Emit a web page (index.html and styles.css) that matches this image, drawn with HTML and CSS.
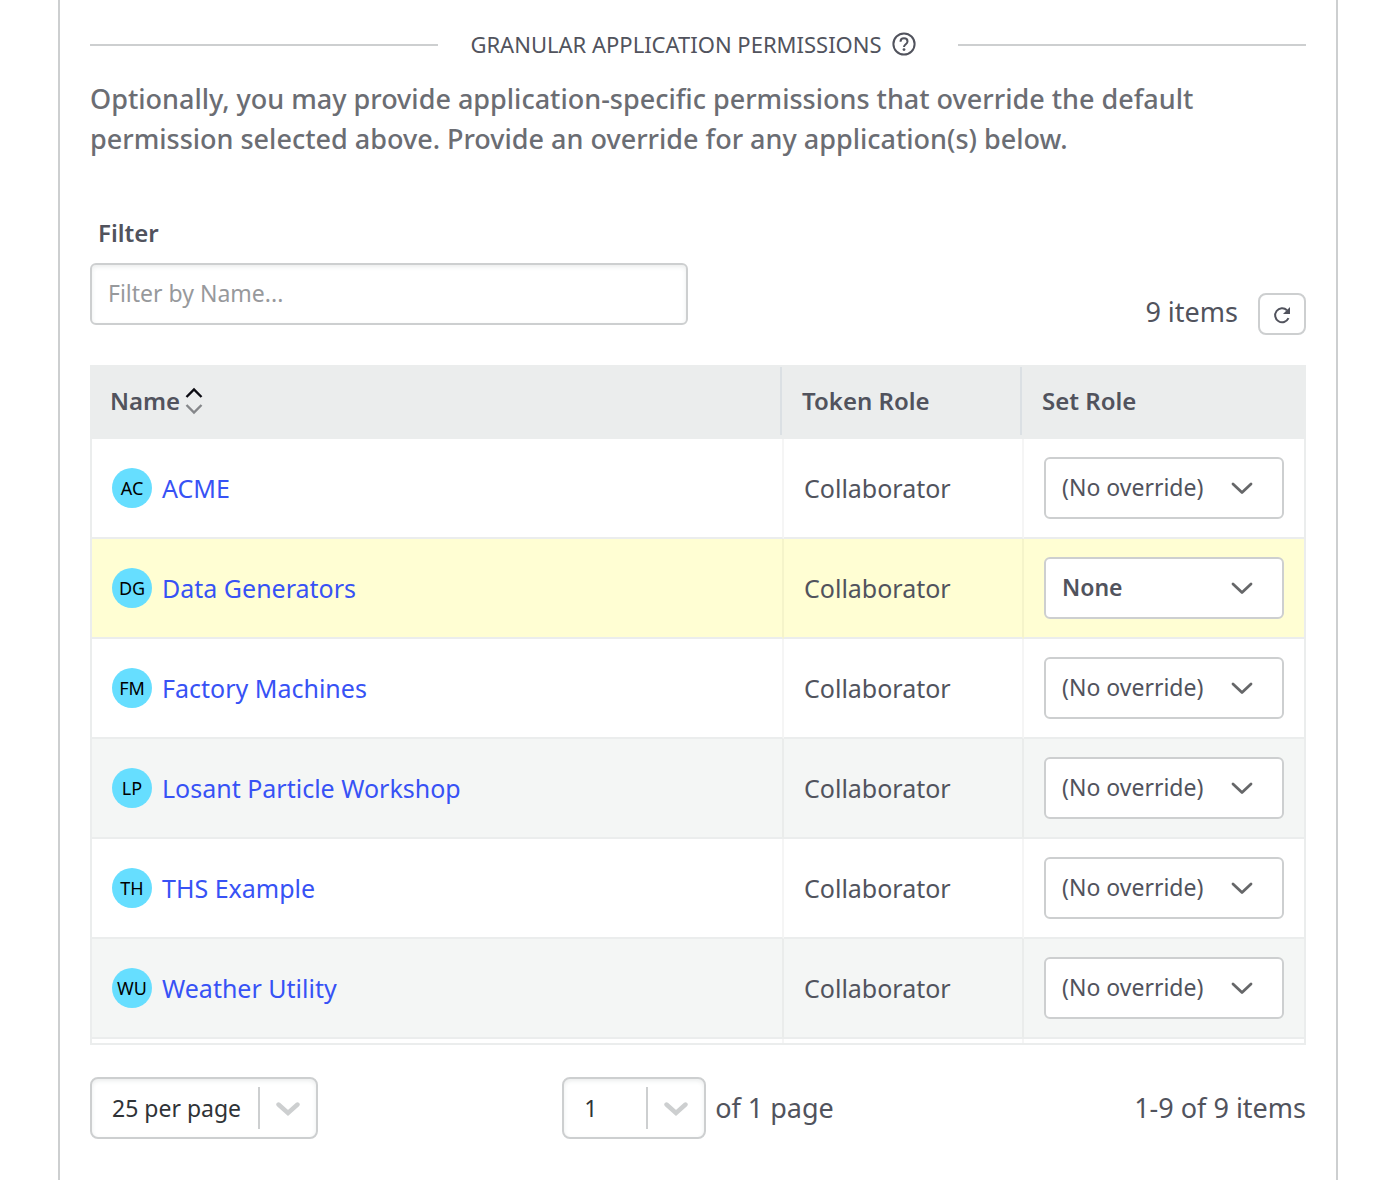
FILE: index.html
```html
<!DOCTYPE html>
<html lang="en">
<head>
<meta charset="utf-8">
<meta name="viewport" content="width=device-width, initial-scale=1">
<title>Granular Application Permissions</title>
<link rel="stylesheet" href="styles.css">
</head>
<body>
<svg width="0" height="0" class="sprite" aria-hidden="true">
  <symbol id="chevron" viewBox="0 0 24 16"><path d="M3 4 12 12.500 21 4" fill="none" stroke="currentColor" stroke-width="2.800" stroke-linecap="round" stroke-linejoin="round"/></symbol>
  <symbol id="chevron-bold" viewBox="0 0 24 16"><path d="M2.500 4.500 12 13 21.500 4.500" fill="none" stroke="currentColor" stroke-width="4.400" stroke-linecap="round" stroke-linejoin="miter"/></symbol>
</svg>
<main class="card">
  <div class="divider">
    <h2 class="divider-title">Granular Application Permissions</h2>
    <button type="button" class="help" aria-label="Help">
      <svg width="24" height="24" viewBox="0 0 24 24" aria-hidden="true"><g fill="none" stroke="currentColor" stroke-width="2"><circle cx="12" cy="12" r="10.600"/><path d="M8.500 9.700c0-2 1.500-3.400 3.500-3.400s3.500 1.300 3.500 3.200c0 2.600-3.500 2.800-3.500 5.500"/></g><circle cx="12" cy="17.600" r="1.400" fill="currentColor"/></svg>
    </button>
  </div>
  <p class="intro">Optionally, you may provide application-specific permissions that override the default permission selected above. Provide an override for any application(s) below.</p>

  <div class="toolbar">
    <div class="filter">
      <label class="filter-label" for="filter">Filter</label>
      <input class="filter-input" id="filter" type="text" placeholder="Filter by Name...">
    </div>
    <div class="summary">
      <span class="summary-count">9 items</span>
      <button type="button" class="refresh" aria-label="Refresh">
        <svg width="20" height="20" viewBox="0 0 20 20" aria-hidden="true"><path d="M16.500 14.200A7 7 0 1 1 15 6.200" fill="none" stroke="currentColor" stroke-width="2"/><path d="M18 3v7h-7z" fill="currentColor"/></svg>
      </button>
    </div>
  </div>

  <div class="table-wrap">
    <table class="apps">
      <thead>
        <tr>
          <th scope="col"><button type="button" class="sort">Name
            <svg width="18" height="28" viewBox="0 0 18 28" aria-hidden="true"><g fill="none" stroke-width="2.400"><path d="M1.500 10 9 2.500 16.500 10" stroke="#0b0b12"/><path d="M1.500 18 9 25.500 16.500 18" stroke="#85878a"/></g></svg></button></th>
          <th scope="col" class="col-token">Token Role</th>
          <th scope="col" class="col-set">Set Role</th>
        </tr>
      </thead>
      <tbody>
        <tr>
          <td><a class="app" href="#acme"><span class="avatar">AC</span>ACME</a></td>
          <td>Collaborator</td>
          <td><span class="role"><select aria-label="Set role for ACME"><option>(No override)</option><option>None</option></select><svg width="24" height="16"><use href="#chevron"/></svg></span></td>
        </tr>
        <tr class="changed">
          <td><a class="app" href="#data-generators"><span class="avatar">DG</span>Data Generators</a></td>
          <td>Collaborator</td>
          <td><span class="role"><select aria-label="Set role for Data Generators"><option>(No override)</option><option selected>None</option></select><svg width="24" height="16"><use href="#chevron"/></svg></span></td>
        </tr>
        <tr>
          <td><a class="app" href="#factory-machines"><span class="avatar">FM</span>Factory Machines</a></td>
          <td>Collaborator</td>
          <td><span class="role"><select aria-label="Set role for Factory Machines"><option>(No override)</option><option>None</option></select><svg width="24" height="16"><use href="#chevron"/></svg></span></td>
        </tr>
        <tr>
          <td><a class="app" href="#losant-particle-workshop"><span class="avatar">LP</span>Losant Particle Workshop</a></td>
          <td>Collaborator</td>
          <td><span class="role"><select aria-label="Set role for Losant Particle Workshop"><option>(No override)</option><option>None</option></select><svg width="24" height="16"><use href="#chevron"/></svg></span></td>
        </tr>
        <tr>
          <td><a class="app" href="#ths-example"><span class="avatar">TH</span>THS Example</a></td>
          <td>Collaborator</td>
          <td><span class="role"><select aria-label="Set role for THS Example"><option>(No override)</option><option>None</option></select><svg width="24" height="16"><use href="#chevron"/></svg></span></td>
        </tr>
        <tr>
          <td><a class="app" href="#weather-utility"><span class="avatar">WU</span>Weather Utility</a></td>
          <td>Collaborator</td>
          <td><span class="role"><select aria-label="Set role for Weather Utility"><option>(No override)</option><option>None</option></select><svg width="24" height="16"><use href="#chevron"/></svg></span></td>
        </tr>
        <tr class="tail" aria-hidden="true"><td></td><td></td><td></td></tr>
      </tbody>
    </table>
  </div>

  <div class="pager">
    <span class="picker picker-size"><select aria-label="Items per page"><option>25 per page</option></select><svg width="24" height="16"><use href="#chevron-bold"/></svg></span>
    <div class="pager-page">
      <span class="picker picker-page"><select aria-label="Page"><option>1</option></select><svg width="24" height="16"><use href="#chevron-bold"/></svg></span>
      <span>of 1 page</span>
    </div>
    <span class="pager-range">1-9 of 9 items</span>
  </div>
</main>
</body>
</html>
```
FILE: styles.css
```css
:root {
  --text: #51535d;
  --muted: #6b6d73;
  --line: #cdcfd0;
  --rule: #ebeded;
  --stripe: #f4f6f5;
}

* {
  box-sizing: border-box;
}

body {
  margin: 0 62px 0 58px;
  background: #fff;
  color: var(--text);
  font-family: "Noto Sans", sans-serif;
  font-size: 27px;
  line-height: 40px;
}

button,
input,
select {
  margin: 0;
  color: inherit;
  font: inherit;
}

button {
  display: inline-flex;
  align-items: center;
  justify-content: center;
  padding: 0;
  border: 0;
  background: none;
}

svg {
  flex: none;
}

.sprite {
  position: absolute;
}

.card {
  min-height: 100vh;
  padding: 25px 30px 41px;
  border: solid var(--line);
  border-width: 0 2px;
}

/* Section heading between two rules */
.divider {
  display: flex;
  align-items: center;
}

.divider::before,
.divider::after {
  content: "";
  flex: 1;
  height: 2px;
  background: var(--line);
}

.divider-title {
  margin: 0 10px 0 32px;
  padding-bottom: 2px;
  font-size: 22px;
  font-weight: 400;
  line-height: 38px;
  text-transform: uppercase;
}

.help {
  margin-right: 42px;
  padding-bottom: 2px;
}

.intro {
  margin: 14px 0 0;
  color: var(--muted);
  font-weight: 500;
}

/* Filter and item count */
.toolbar {
  display: flex;
  justify-content: space-between;
  margin-top: 54px;
}

.filter {
  width: 598px;
}

.filter-label {
  display: block;
  padding: 0 8px;
  font-size: 24px;
  font-weight: 600;
}

.filter-input {
  display: block;
  width: 100%;
  height: 62px;
  margin-top: 10px;
  padding: 0 16px 2px;
  border: 2px solid var(--line);
  border-radius: 6px;
  box-shadow: inset 0 2px 4px rgba(60, 80, 80, 0.1);
  font-size: 23px;
}

.filter-input::placeholder {
  color: #97999c;
  opacity: 1;
}

.summary {
  display: flex;
  align-items: center;
  align-self: flex-end;
  gap: 20px;
  height: 42px;
  margin-bottom: -10px;
}

.summary-count {
  padding-bottom: 4px;
}

.refresh {
  width: 48px;
  height: 42px;
  border: 2px solid var(--line);
  border-radius: 8px;
}

/* Applications table */
.table-wrap {
  margin-top: 40px;
  border: solid var(--rule);
  border-width: 0 2px 2px;
}

.apps {
  width: 100%;
  border-spacing: 0;
  table-layout: fixed;
  font-size: 25px;
}

.apps th {
  height: 74px;
  padding: 0 18px 2px;
  background: var(--rule);
  font-size: 24px;
  font-weight: 600;
  text-align: left;
}

.apps th:not(:last-child) {
  background: linear-gradient(#dbe0e4, #dbe0e4) no-repeat right 2px top 2px / 2px 68px var(--rule);
}

.col-token {
  width: 240px;
}

.col-set {
  width: 280px;
}

.sort {
  gap: 5px;
}

.apps td {
  height: 100px;
  padding: 0 20px;
  border-bottom: 2px solid var(--rule);
}

.apps td:not(:last-child) {
  border-right: 2px solid rgba(0, 0, 0, 0.04);
}

.apps tbody tr:nth-child(even) {
  background: var(--stripe);
}

.apps tbody tr.changed:nth-child(n) {
  background: #fffed3;
}

.apps .tail td {
  height: 4px;
  border-bottom: 0;
}

.app {
  display: flex;
  align-items: center;
  gap: 10px;
  color: #3752f5;
  text-decoration: none;
}

.avatar {
  width: 40px;
  height: 40px;
  border-radius: 50%;
  background: #66deff;
  color: #000;
  font-size: 18px;
  text-align: center;
}

/* Drop-downs with a drawn chevron */
.role,
.picker {
  display: grid;
  align-items: center;
}

.role select,
.role svg,
.picker select,
.picker svg {
  grid-area: 1 / 1;
}

.role svg,
.picker svg {
  justify-self: end;
  pointer-events: none;
}

.role select,
.picker select {
  width: 100%;
  height: 62px;
  border: 2px solid var(--line);
  border-radius: 6px;
  appearance: none;
  background: #fff;
  font-size: 23px;
}

.role select {
  padding: 0 16px 2px;
}

.role svg {
  margin-right: 30px;
  color: #666769;
}

.role select:hover {
  border-color: var(--muted);
}

.changed .role select {
  font-weight: 600;
}

.picker select {
  padding: 0 20px;
  border-radius: 8px;
  background: linear-gradient(var(--line), var(--line)) no-repeat right 56px center / 2px 42px #fff;
  box-shadow: inset 0 2px 4px rgba(60, 80, 80, 0.1);
  color: #2f3337;
}

.picker svg {
  margin-right: 18px;
  color: var(--line);
}

.picker-size {
  width: 228px;
}

.picker-page {
  width: 144px;
}

/* Pagination */
.pager {
  display: grid;
  grid-template-columns: 1fr auto 1fr;
  align-items: center;
  margin-top: 32px;
}

.pager-page {
  display: flex;
  align-items: center;
  gap: 9px;
}

.pager-range {
  justify-self: end;
}
```
